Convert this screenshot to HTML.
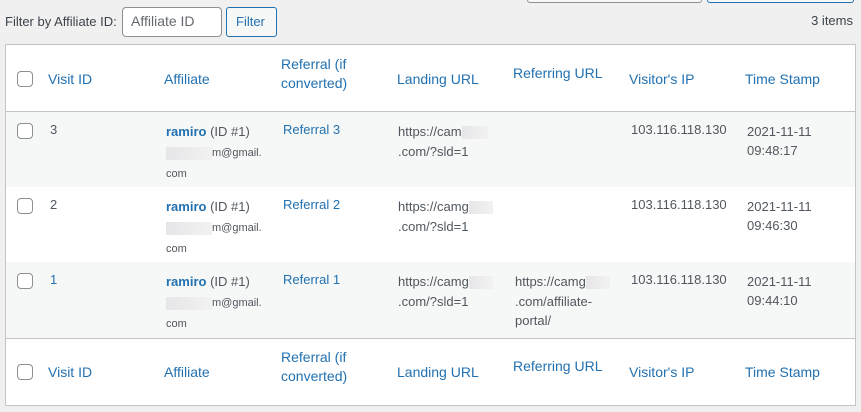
<!DOCTYPE html>
<html><head><meta charset="utf-8"><style>
body{margin:0;width:861px;height:412px;background:#f0f0f1;font-family:"Liberation Sans",sans-serif;color:#3c434a;position:relative;overflow:hidden}
.a{position:absolute;white-space:nowrap}
.h{font-size:14px;color:#2271b1}
.t{font-size:13px;color:#50575e}
.l{color:#2271b1}
.cb{position:absolute;width:14px;height:14px;border:1px solid #8c8f94;border-radius:4px;background:#fff}
.blur{display:inline-block;width:46px;height:13px;background:linear-gradient(90deg,#e6e6e8,#f2f2f3);vertical-align:middle}
</style></head><body>
<div class="a" style="left:527px;top:-6px;width:173px;height:7px;border:1px solid #8c8f94;border-radius:3px;background:#f6f7f7"></div>
<div class="a" style="left:707px;top:-6px;width:145px;height:7px;border:1px solid #2271b1;border-radius:3px;background:#f6f7f7"></div>
<div class="a t" style="left:5px;top:14px;color:#3c434a">Filter by Affiliate ID:</div>
<div class="a" style="left:122px;top:7px;width:98px;height:28px;border:1px solid #8c8f94;border-radius:4px;background:#fff"></div>
<div class="a" style="left:131px;top:13px;font-size:14px;color:#646970">Affiliate ID</div>
<div class="a" style="left:226px;top:7px;width:49px;height:28px;border:1px solid #2271b1;border-radius:3px;background:#f6f7f7"></div>
<div class="a" style="left:236px;top:14px;font-size:13px;color:#2271b1">Filter</div>
<div class="a t" style="right:8px;top:13px;color:#3c434a">3 items</div>

<div class="a" style="left:5px;top:44px;width:849px;height:360px;border:1px solid #c3c4c7;background:#fff"></div>
<div class="a" style="left:6px;top:111px;width:849px;height:1px;background:#c3c4c7"></div>
<div class="a" style="left:6px;top:112px;width:849px;height:75px;background:#f6f7f7"></div>
<div class="a" style="left:6px;top:262px;width:849px;height:76px;background:#f6f7f7"></div>
<div class="a" style="left:6px;top:338px;width:849px;height:1px;background:#c3c4c7"></div>

<!-- header -->
<div class="cb" style="left:17px;top:71px"></div>
<div class="a h" style="left:48px;top:71px">Visit ID</div>
<div class="a h" style="left:164px;top:71px">Affiliate</div>
<div class="a h" style="left:281px;top:55px;line-height:19px">Referral (if<br>converted)</div>
<div class="a h" style="left:397px;top:71px">Landing URL</div>
<div class="a h" style="left:513px;top:65px">Referring URL</div>
<div class="a h" style="left:629px;top:71px">Visitor's IP</div>
<div class="a h" style="left:745px;top:71px">Time Stamp</div>

<!-- rows -->
<div class="cb" style="left:17px;top:123px"></div>
<div class="a t" style="left:50px;top:122px">3</div>
<div class="a t" style="left:166px;top:122px;line-height:20px;font-size:13px"><b class="l" style="font-weight:bold">ramiro</b> (ID #1)<br><span style="font-size:11px"><span class="blur"></span>m@gmail.<br>com</span></div>
<div class="a t l" style="left:283px;top:122px">Referral 3</div>
<div class="a t" style="left:398px;top:122px;line-height:20px">https://cam<span class="blur" style="width:26px"></span><br>.com/?sld=1</div>
<div class="a t" style="left:631px;top:122px">103.116.118.130</div>
<div class="a t" style="left:747px;top:122px;line-height:19px">2021-11-11<br>09:48:17</div>

<div class="cb" style="left:17px;top:198px"></div>
<div class="a t" style="left:50px;top:197px">2</div>
<div class="a t" style="left:166px;top:197px;line-height:20px"><b class="l">ramiro</b> (ID #1)<br><span style="font-size:11px"><span class="blur"></span>m@gmail.<br>com</span></div>
<div class="a t l" style="left:283px;top:197px">Referral 2</div>
<div class="a t" style="left:398px;top:197px;line-height:20px">https://camg<span class="blur" style="width:24px"></span><br>.com/?sld=1</div>
<div class="a t" style="left:631px;top:197px">103.116.118.130</div>
<div class="a t" style="left:747px;top:197px;line-height:19px">2021-11-11<br>09:46:30</div>

<div class="cb" style="left:17px;top:273px"></div>
<div class="a t l" style="left:50px;top:272px">1</div>
<div class="a t" style="left:166px;top:272px;line-height:20px"><b class="l">ramiro</b> (ID #1)<br><span style="font-size:11px"><span class="blur"></span>m@gmail.<br>com</span></div>
<div class="a t l" style="left:283px;top:272px">Referral 1</div>
<div class="a t" style="left:398px;top:272px;line-height:20px">https://camg<span class="blur" style="width:24px"></span><br>.com/?sld=1</div>
<div class="a t" style="left:515px;top:272px;line-height:19.5px">https://camg<span class="blur" style="width:24px"></span><br>.com/affiliate-<br>portal/</div>
<div class="a t" style="left:631px;top:272px">103.116.118.130</div>
<div class="a t" style="left:747px;top:272px;line-height:19px">2021-11-11<br>09:44:10</div>

<!-- footer -->
<div class="cb" style="left:17px;top:364px"></div>
<div class="a h" style="left:48px;top:364px">Visit ID</div>
<div class="a h" style="left:164px;top:364px">Affiliate</div>
<div class="a h" style="left:281px;top:348px;line-height:19px">Referral (if<br>converted)</div>
<div class="a h" style="left:397px;top:364px">Landing URL</div>
<div class="a h" style="left:513px;top:358px">Referring URL</div>
<div class="a h" style="left:629px;top:364px">Visitor's IP</div>
<div class="a h" style="left:745px;top:364px">Time Stamp</div>
</body></html>
